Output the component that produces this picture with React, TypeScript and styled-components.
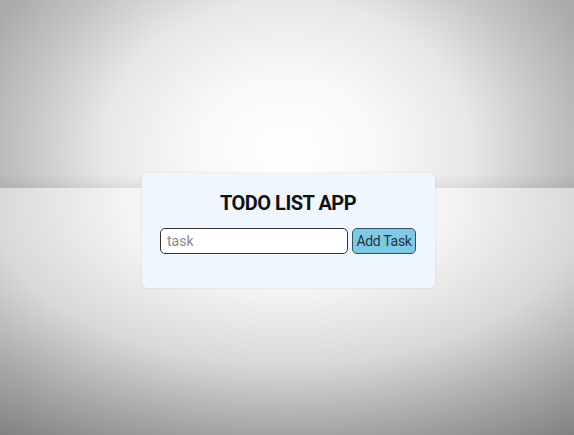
import React from "react";
import styled, { createGlobalStyle } from "styled-components";

const Global = createGlobalStyle`
  html, body { margin: 0; padding: 0; }
  body { font-family: Roboto, "Liberation Sans", sans-serif; }
  * { box-sizing: border-box; }
`;

const Backdrop = styled.div`
  min-height: 100vh;
  display: flex;
  align-items: center;
  justify-content: center;
  padding: 26px 0 0 3px;
  background:
    linear-gradient(to top, rgba(0,0,0,0.06), rgba(0,0,0,0) 14px) 0 0 / 100% 188px no-repeat,
    radial-gradient(ellipse 330px 270px at 50% 80%, #ffffff 0%, #f8f8f8 28%, #e7e7e7 56%, #c4c4c4 80%, #aaaaaa 100%) 0 0 / 100% 188px no-repeat,
    radial-gradient(ellipse 540px 300px at 50% 5%, #ffffff 0%, #f4f4f4 30%, #d8d8d8 55%, #a4a4a4 78%, #7e7e7e 96%, #777777 100%) 0 188px / 100% 247px no-repeat,
    #c0c0c0;
`;

const Card = styled.div`
  width: 293px;
  height: 115px;
  background: #eff6fe;
  border-radius: 5px;
  box-shadow: 0 0 2px rgba(0, 0, 0, 0.15);
  padding: 18px 19px 0 18px;
  display: flex;
  flex-direction: column;
  align-items: center;
`;

const Title = styled.h1`
  margin: 0 0 13px 0;
  font-size: 20px;
  line-height: 24px;
  font-weight: 700;
  letter-spacing: -0.5px;
  color: #111;
`;

const Row = styled.div`
  display: flex;
  gap: 4px;
  width: 100%;
`;

const Input = styled.input`
  flex: 1;
  min-width: 0;
  height: 26px;
  border: 1.5px solid #333;
  border-radius: 5px;
  background: #fff;
  padding: 0 6px;
  font-family: Roboto, "Liberation Sans", sans-serif;
  font-size: 14px;
  color: #222;
  outline: none;
  &::placeholder { color: #8a8a8a; }
`;

const Button = styled.button`
  flex: 0 0 64px;
  height: 26px;
  border: 1.5px solid #3b4d59;
  border-radius: 5px;
  background: #7ecae6;
  color: #1f3341;
  font-family: Roboto, "Liberation Sans", sans-serif;
  font-size: 14px;
  letter-spacing: -0.3px;
  padding: 0;
  cursor: pointer;
`;

export default function App() {
  return (
    <>
      <Global />
      <Backdrop>
        <Card>
          <Title>TODO LIST APP</Title>
          <Row>
            <Input placeholder="task" />
            <Button>Add Task</Button>
          </Row>
        </Card>
      </Backdrop>
    </>
  );
}
